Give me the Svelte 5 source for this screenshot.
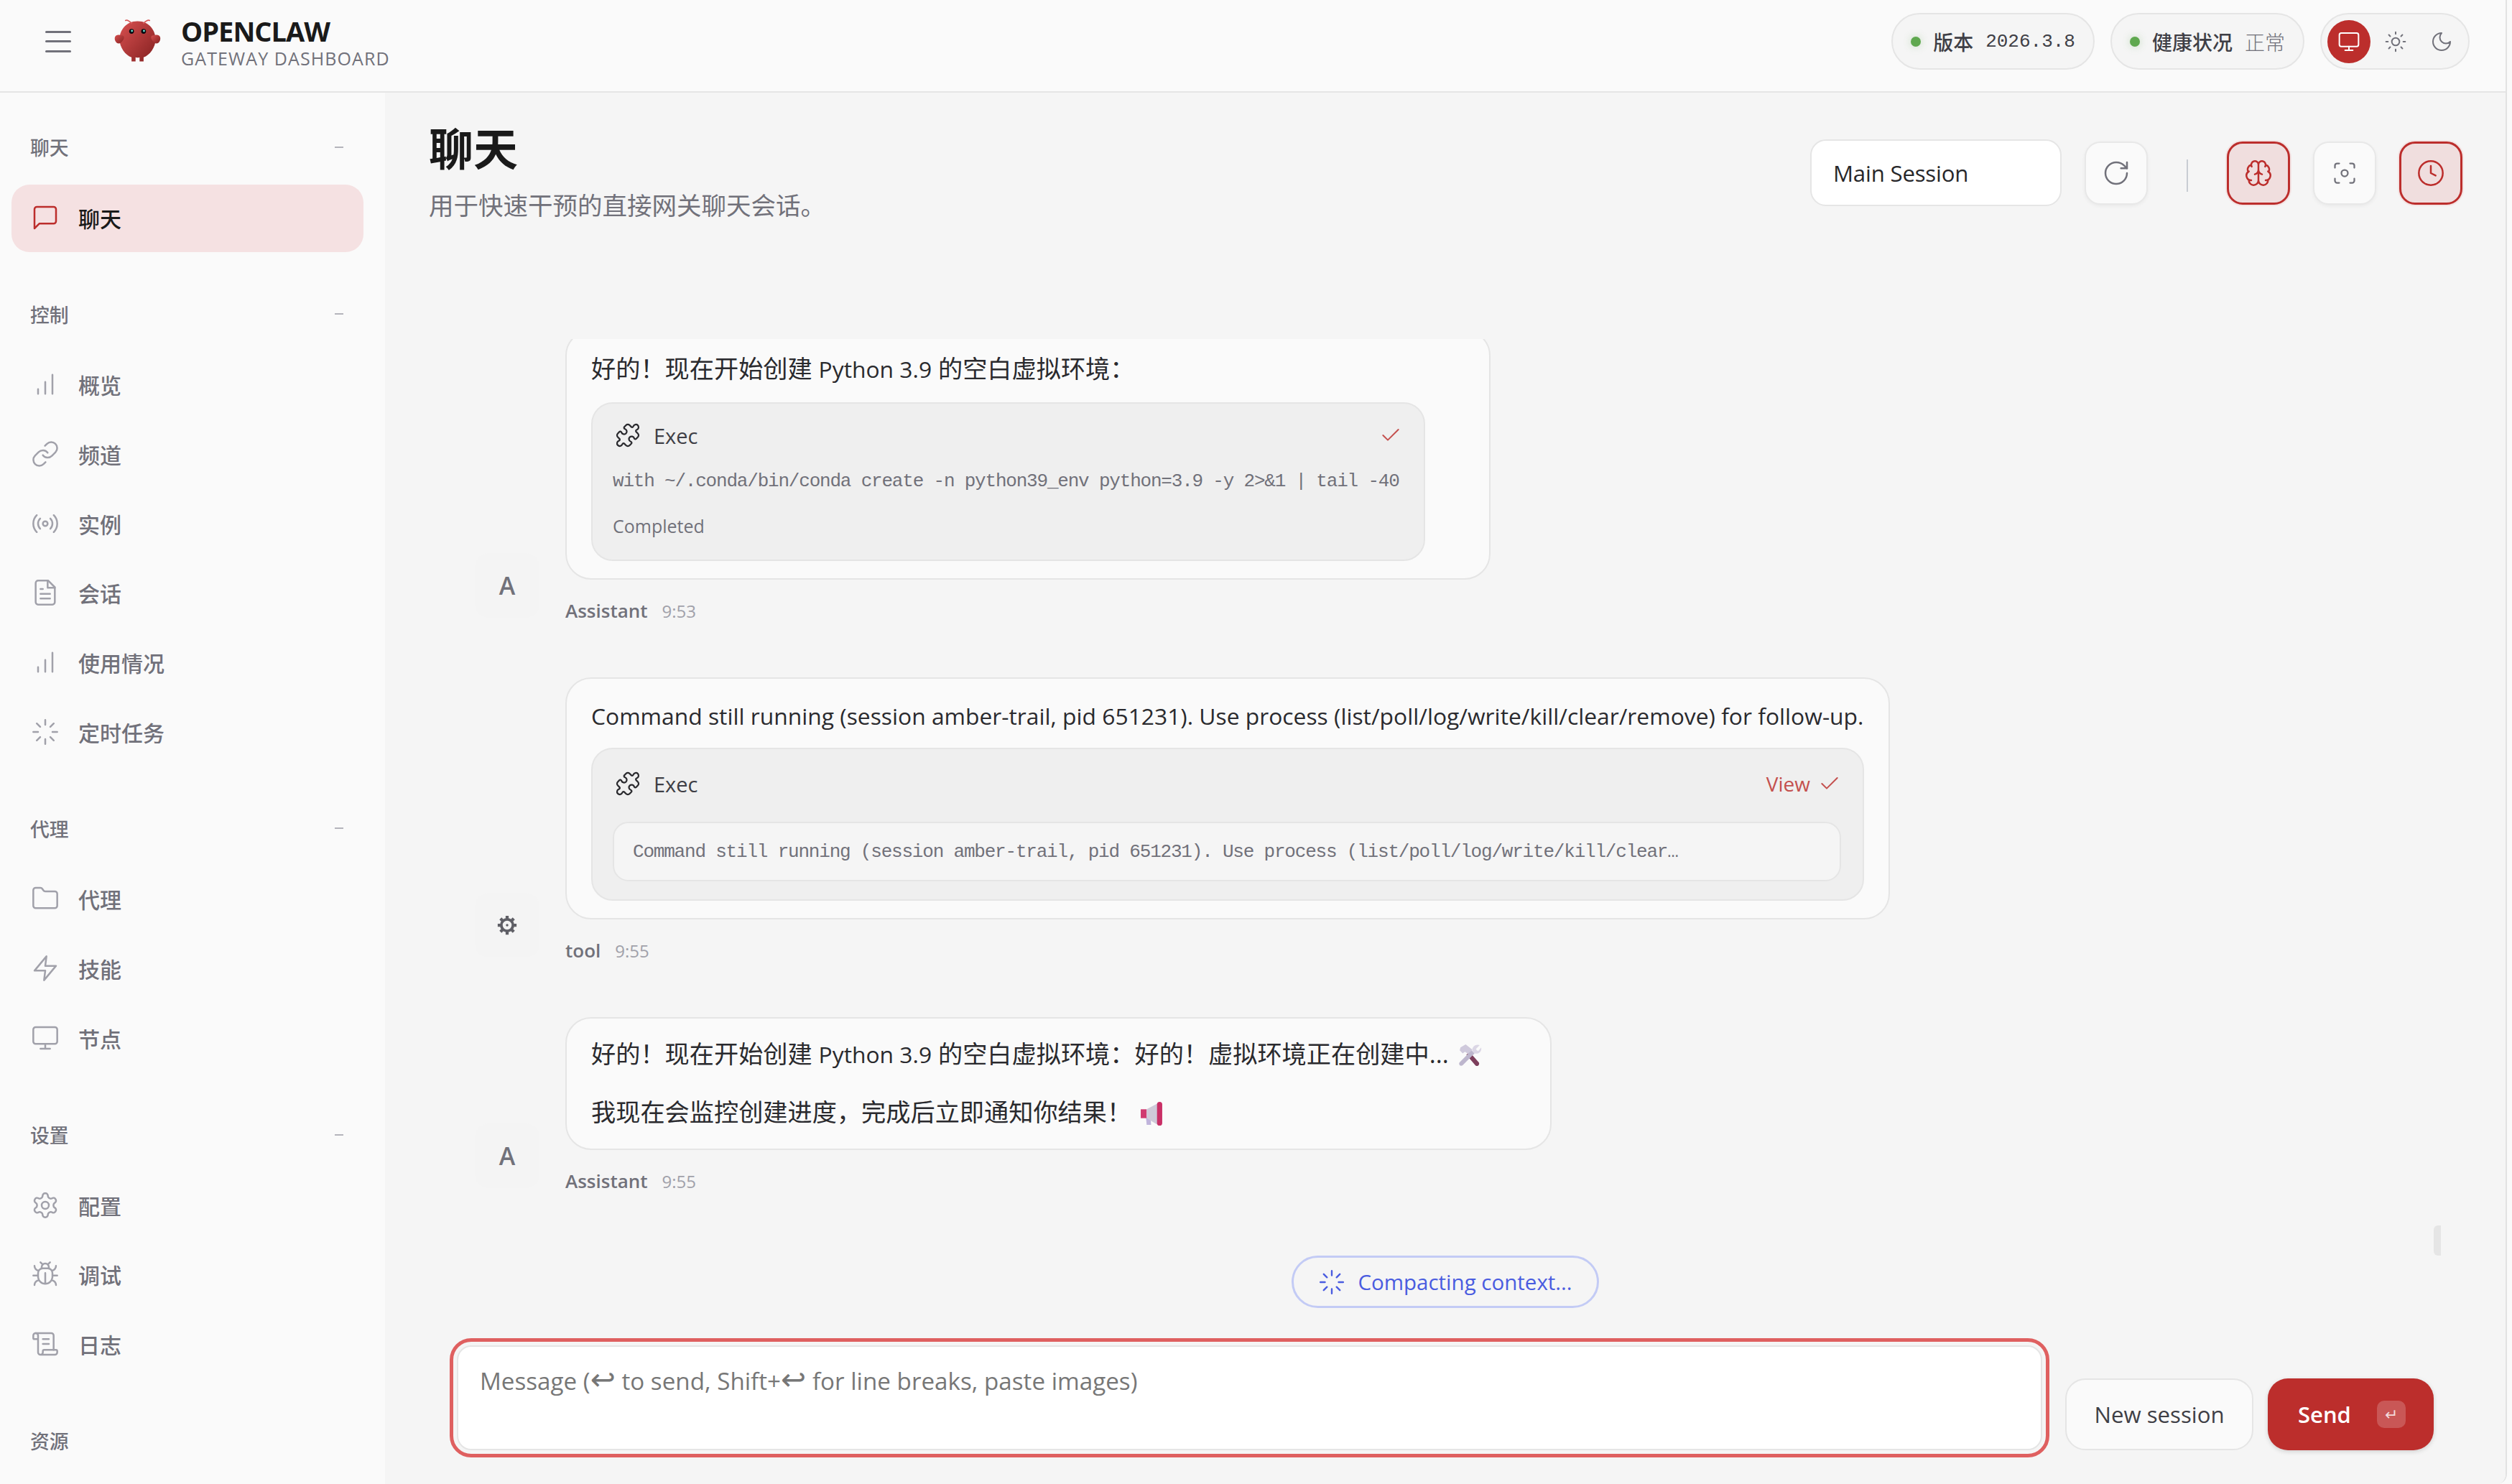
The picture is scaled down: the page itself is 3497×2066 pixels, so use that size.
<script>
  const icons = {
    message: '<path d="M21 15a2 2 0 0 1-2 2H7l-4 4V5a2 2 0 0 1 2-2h14a2 2 0 0 1 2 2z"/>',
    bars: '<path d="M12 20V10M18 20V4M6 20v-4"/>',
    link: '<path d="M10 13a5 5 0 0 0 7.54.54l3-3a5 5 0 0 0-7.07-7.07l-1.72 1.71"/><path d="M14 11a5 5 0 0 0-7.54-.54l-3 3a5 5 0 0 0 7.07 7.07l1.71-1.71"/>',
    radio: '<circle cx="12" cy="12" r="2"/><path d="M4.93 19.07a10 10 0 0 1 0-14.14M7.76 16.24a6 6 0 0 1 0-8.49M16.24 7.76a6 6 0 0 1 0 8.49M19.07 4.93a10 10 0 0 1 0 14.14"/>',
    file: '<path d="M14.5 2H6a2 2 0 0 0-2 2v16a2 2 0 0 0 2 2h12a2 2 0 0 0 2-2V7.5L14.5 2z"/><path d="M14 2v6h6M16 13H8M16 17H8M10 9H8"/>',
    loader: '<path d="M12 2v4M12 18v4M4.93 4.93l2.83 2.83M16.24 16.24l2.83 2.83M2 12h4M18 12h4M4.93 19.07l2.83-2.83M16.24 7.76l2.83-2.83"/>',
    folder: '<path d="M4 20h16a2 2 0 0 0 2-2V8a2 2 0 0 0-2-2h-7.93a2 2 0 0 1-1.66-.9l-.82-1.2A2 2 0 0 0 7.93 3H4a2 2 0 0 0-2 2v13c0 1.1.9 2 2 2Z"/>',
    zap: '<path d="M13 2 3 14h9l-1 8 10-12h-9l1-8z"/>',
    monitor: '<rect x="2" y="3" width="20" height="14" rx="2"/><path d="M8 21h8M12 17v4"/>',
    gear: '<path d="M12.22 2h-.44a2 2 0 0 0-2 2v.18a2 2 0 0 1-1 1.73l-.43.25a2 2 0 0 1-2 0l-.15-.08a2 2 0 0 0-2.73.73l-.22.38a2 2 0 0 0 .73 2.73l.15.1a2 2 0 0 1 1 1.72v.51a2 2 0 0 1-1 1.74l-.15.09a2 2 0 0 0-.73 2.73l.22.38a2 2 0 0 0 2.73.73l.15-.08a2 2 0 0 1 2 0l.43.25a2 2 0 0 1 1 1.73V20a2 2 0 0 0 2 2h.44a2 2 0 0 0 2-2v-.18a2 2 0 0 1 1-1.73l.43-.25a2 2 0 0 1 2 0l.15.08a2 2 0 0 0 2.73-.73l.22-.39a2 2 0 0 0-.73-2.73l-.15-.08a2 2 0 0 1-1-1.74v-.5a2 2 0 0 1 1-1.74l.15-.09a2 2 0 0 0 .73-2.73l-.22-.38a2 2 0 0 0-2.73-.73l-.15.08a2 2 0 0 1-2 0l-.43-.25a2 2 0 0 1-1-1.73V4a2 2 0 0 0-2-2z"/><circle cx="12" cy="12" r="3"/>',
    cog: '<circle cx="12" cy="12" r="6.5" stroke-width="3"/><circle cx="12" cy="12" r="1.4" fill="currentColor" stroke="none"/><path stroke-width="3.4" stroke-linecap="butt" d="M12 1.5v3.5M12 19v3.5M1.5 12H5M19 12h3.5M4.6 4.6l2.4 2.4M17 17l2.4 2.4M4.6 19.4 7 17M17 7l2.4-2.4"/>',
    bug: '<path d="m8 2 1.88 1.88M14.12 3.88 16 2M9 7.13v-1a3.003 3.003 0 1 1 6 0v1M12 20c-3.3 0-6-2.7-6-6v-3a4 4 0 0 1 4-4h4a4 4 0 0 1 4 4v3c0 3.3-2.7 6-6 6M12 20v-9M6.53 9C4.6 8.8 3 7.1 3 5M6 13H2M3 21c0-2.1 1.7-3.9 3.8-4M20.97 5c0 2.1-1.6 3.8-3.5 4M22 13h-4M17.2 17c2.1.1 3.8 1.9 3.8 4"/>',
    scroll: '<path d="M15 12h-5M15 8h-5M19 17V5a2 2 0 0 0-2-2H4"/><path d="M8 21h12a2 2 0 0 0 2-2v-1a1 1 0 0 0-1-1H11a1 1 0 0 0-1 1v1a2 2 0 1 1-4 0V5a2 2 0 1 0-4 0v2a1 1 0 0 0 1 1h3"/>',
    puzzle: '<path d="M19.439 7.85c-.049.322.059.648.289.878l1.568 1.568c.47.47.706 1.087.706 1.704s-.235 1.233-.706 1.704l-1.611 1.611a.98.98 0 0 1-.837.276c-.47-.07-.802-.48-.968-.925a2.501 2.501 0 1 0-3.214 3.214c.446.166.855.497.925.968a.979.979 0 0 1-.276.837l-1.61 1.61a2.404 2.404 0 0 1-1.705.707 2.402 2.402 0 0 1-1.704-.706l-1.568-1.568a1.026 1.026 0 0 0-.877-.29c-.493.074-.84.504-1.02.968a2.5 2.5 0 1 1-3.237-3.237c.464-.18.894-.527.967-1.02a1.026 1.026 0 0 0-.289-.877l-1.568-1.568A2.402 2.402 0 0 1 1.998 12c0-.617.236-1.234.706-1.704L4.23 8.77c.24-.24.581-.353.917-.303.515.077.877.528 1.073 1.01a2.5 2.5 0 1 0 3.259-3.259c-.482-.196-.933-.558-1.01-1.073-.05-.336.062-.676.303-.917l1.525-1.525A2.402 2.402 0 0 1 12 1.998c.617 0 1.234.236 1.704.706l1.568 1.568c.23.23.556.338.877.29.493-.074.84-.504 1.02-.968a2.5 2.5 0 1 1 3.237 3.237c-.464.18-.894.527-.967 1.02Z"/>',
    refresh: '<path d="M21 12a9 9 0 1 1-9-9c2.52 0 4.93 1 6.74 2.74L21 8"/><path d="M21 3v5h-5"/>',
    brain: '<path d="M12 18V5M15 13a4.17 4.17 0 0 1-3-4 4.17 4.17 0 0 1-3 4M17.598 6.5A3 3 0 1 0 12 5a3 3 0 1 0-5.598 1.5M17.997 5.125a4 4 0 0 1 2.526 5.77M18 18a4 4 0 0 0 2-7.464M19.967 17.483A4 4 0 1 1 12 18a4 4 0 1 1-7.967-.517M6 18a4 4 0 0 1-2-7.464M6.003 5.125a4 4 0 0 0-2.526 5.77"/>',
    focus: '<path d="M3 7V5a2 2 0 0 1 2-2h2M17 3h2a2 2 0 0 1 2 2v2M21 17v2a2 2 0 0 1-2 2h-2M7 21H5a2 2 0 0 1-2-2v-2"/><circle cx="12" cy="12" r="3"/>',
    clock: '<circle cx="12" cy="12" r="10"/><path d="M12 6v6l4 2"/>',
    sun: '<circle cx="12" cy="12" r="4"/><path d="M12 2v2M12 20v2M4.93 4.93l1.41 1.41M17.66 17.66l1.41 1.41M2 12h2M20 12h2M6.34 17.66l-1.41 1.41M19.07 4.93l-1.41 1.41"/>',
    moon: '<path d="M12 3a6 6 0 0 0 9 9 9 9 0 1 1-9-9Z"/>',
    check: '<path d="M20 6 9 17l-5-5"/>'
  };

  const groups = [
    { label: "聊天", items: [{ icon: "message", text: "聊天", active: true }] },
    {
      label: "控制",
      items: [
        { icon: "bars", text: "概览" },
        { icon: "link", text: "频道" },
        { icon: "radio", text: "实例" },
        { icon: "file", text: "会话" },
        { icon: "bars", text: "使用情况" },
        { icon: "loader", text: "定时任务" }
      ]
    },
    {
      label: "代理",
      items: [
        { icon: "folder", text: "代理" },
        { icon: "zap", text: "技能" },
        { icon: "monitor", text: "节点" }
      ]
    },
    {
      label: "设置",
      items: [
        { icon: "gear", text: "配置" },
        { icon: "bug", text: "调试" },
        { icon: "scroll", text: "日志" }
      ]
    }
  ];

  const command = "Command still running (session amber-trail, pid 651231). Use process (list/poll/log/write/kill/clear/remove) for follow-up.";
</script>

{#snippet icon(name, cls = "")}
  <svg class="ic {cls}" viewBox="0 0 24 24" fill="none" stroke="currentColor" stroke-linecap="round" stroke-linejoin="round">{@html icons[name]}</svg>
{/snippet}

<div class="app">
  <header class="topbar">
    <button class="burger" aria-label="menu"><i></i><i></i><i></i></button>
    <svg class="logo" viewBox="0 0 120 120">
      <defs>
        <linearGradient id="claw" x1="0%" y1="0%" x2="100%" y2="100%">
          <stop offset="0%" stop-color="#d85050" />
          <stop offset="100%" stop-color="#842020" />
        </linearGradient>
      </defs>
      <path fill="url(#claw)" d="M60 10C30 10 15 35 15 55C15 75 30 95 45 100L45 110L55 110L55 100C55 100 60 102 65 100L65 110L75 110L75 100C90 95 105 75 105 55C105 35 90 10 60 10Z" />
      <path fill="url(#claw)" d="M20 45C5 40 0 50 5 60C10 70 20 65 25 55C28 48 25 45 20 45Z" />
      <path fill="url(#claw)" d="M100 45C115 40 120 50 115 60C110 70 100 65 95 55C92 48 95 45 100 45Z" />
      <path d="M45 15Q35 5 30 8M75 15Q85 5 90 8" fill="none" stroke="#d85a5a" stroke-width="3" stroke-linecap="round" />
      <circle cx="45" cy="35" r="6" fill="#050810" />
      <circle cx="75" cy="35" r="6" fill="#050810" />
      <circle cx="46" cy="34" r="2.5" fill="#6fe3d2" />
      <circle cx="76" cy="34" r="2.5" fill="#6fe3d2" />
    </svg>
    <div class="brand">
      <div class="brand-title">OPENCLAW</div>
      <div class="brand-sub">GATEWAY DASHBOARD</div>
    </div>
    <div class="top-right">
      <div class="pill"><span class="dot"></span><span class="pill-label">版本</span><span class="pill-mono">2026.3.8</span></div>
      <div class="pill"><span class="dot"></span><span class="pill-label">健康状况</span><span class="pill-value">正常</span></div>
      <div class="theme">
        <span class="theme-btn on">{@render icon("monitor")}</span>
        <span class="theme-btn">{@render icon("sun")}</span>
        <span class="theme-btn">{@render icon("moon")}</span>
      </div>
    </div>
  </header>

  <div class="body">
    <nav class="sidebar">
      {#each groups as group}
        <section class="group">
          <div class="group-label"><span>{group.label}</span><span class="dash"></span></div>
          <div class="items">
            {#each group.items as item}
              <div class="item" class:active={item.active}>
                {@render icon(item.icon)}
                <span>{item.text}</span>
              </div>
            {/each}
          </div>
        </section>
      {/each}
      <section class="group">
        <div class="group-label"><span>资源</span></div>
      </section>
    </nav>

    <main class="main">
      <div class="page-head">
        <div>
          <h1>聊天</h1>
          <p class="page-sub">用于快速干预的直接网关聊天会话。</p>
        </div>
        <div class="controls">
          <div class="session">Main Session</div>
          <button class="ctl">{@render icon("refresh")}</button>
          <span class="divider"></span>
          <button class="ctl on">{@render icon("brain")}</button>
          <button class="ctl">{@render icon("focus", "small")}</button>
          <button class="ctl on">{@render icon("clock")}</button>
        </div>
      </div>

      <div class="thread">
        <div class="msg">
          <div class="avatar">A</div>
          <div class="msg-col">
            <div class="card w1">
              <p>好的！现在开始创建 <span class="lat">Python 3.9</span> 的空白虚拟环境：</p>
              <div class="tool narrow">
                <div class="tool-head">
                  {@render icon("puzzle")}
                  <span class="tool-name">Exec</span>
                  <span class="tool-state">{@render icon("check")}</span>
                </div>
                <div class="tool-cmd">with ~/.conda/bin/conda create -n python39_env python=3.9 -y 2&gt;&amp;1 | tail -40</div>
                <div class="tool-done">Completed</div>
              </div>
            </div>
            <div class="meta"><b>Assistant</b><time>9:53</time></div>
          </div>
        </div>

        <div class="msg">
          <div class="avatar">{@render icon("cog", "cog")}</div>
          <div class="msg-col">
            <div class="card w2">
              <p class="lat">{command}</p>
              <div class="tool">
                <div class="tool-head wide">
                  {@render icon("puzzle")}
                  <span class="tool-name">Exec</span>
                  <span class="tool-state">View {@render icon("check")}</span>
                </div>
                <div class="tool-out">Command still running (session amber-trail, pid 651231). Use process (list/poll/log/write/kill/clear…</div>
              </div>
            </div>
            <div class="meta"><b>tool</b><time>9:55</time></div>
          </div>
        </div>

        <div class="msg">
          <div class="avatar">A</div>
          <div class="msg-col">
            <div class="card w3">
              <p class="para">好的！现在开始创建 <span class="lat">Python 3.9</span> 的空白虚拟环境：好的！虚拟环境正在创建中...
                <svg class="emoji" viewBox="0 0 32 32">
                  <path d="M12 15 24 29c1 1.5 3.5 1.5 4.5 0s1-3 0-4L16 11z" fill="#7d3f5c" />
                  <path d="M4 5l7-4 9 7-5 6-5-3-3 2-4-4z" fill="#cfc9dc" />
                  <path d="M3 25 19 9l4 4L7 29c-1 1-3 1-4 0s-1-3 0-4z" fill="#bdb6cd" />
                  <path d="M30 2l-5 5 1 2 2 1 4-5c1 5-3 10-9 8l-3-3c-1-6 5-10 10-8z" fill="#dbd6e5" />
                </svg>
              </p>
              <p class="para">我现在会监控创建进度，完成后立即通知你结果！
                <svg class="emoji" viewBox="0 0 32 32">
                  <path d="M8 20h6l1 11H9z" fill="#c0b4dc" />
                  <path d="M1 10h8v12H1z" fill="#d03a70" />
                  <path d="M9 10 24 2v29L9 22z" fill="#cfc9d8" />
                  <rect x="23" y="0" width="7" height="32" rx="3.5" fill="#c92f66" />
                </svg>
              </p>
            </div>
            <div class="meta"><b>Assistant</b><time>9:55</time></div>
          </div>
        </div>

        <div class="compacting">{@render icon("loader")}<span>Compacting context...</span></div>
        <span class="thumb"></span>
      </div>

      <div class="compose">
        <div class="input">Message (<span class="arrow">↩</span> to send, Shift+<span class="arrow">↩</span> for line breaks, paste images)</div>
        <button class="btn">New session</button>
        <button class="btn send">Send<kbd>↵</kbd></button>
      </div>
    </main>
  </div>
</div>

<style>
  :global(body) {
    margin: 0;
    background: #fafafa;
    overflow: hidden;
  }

  .app {
    width: 3490px;
    height: 2066px;
    box-sizing: border-box;
    border-right: 2px solid #e2e2e2;
    border-bottom-right-radius: 14px;
    display: flex;
    flex-direction: column;
    overflow: hidden;
    font-family: "Open Sans", "Noto Sans CJK SC", sans-serif;
    font-size: 33.5px;
    color: #1a1a1a;
  }

  button {
    font: inherit;
    color: inherit;
    padding: 0;
    cursor: pointer;
  }

  .ic {
    width: 40px;
    height: 40px;
    stroke-width: 1.5;
    flex: none;
    display: block;
  }

  /* top bar */
  .topbar {
    height: 129px;
    box-sizing: border-box;
    border-bottom: 2px solid #e5e5e5;
    background: #fafafa;
    display: flex;
    align-items: center;
    padding: 0 50px 12px 63px;
    flex: none;
  }
  .burger {
    width: 36px;
    height: 30px;
    background: none;
    border: 0;
    display: flex;
    flex-direction: column;
    justify-content: space-between;
    margin-right: 59px;
  }
  .burger i {
    display: block;
    height: 3px;
    border-radius: 2px;
    background: #71717a;
  }
  .logo {
    width: 67px;
    height: 67px;
    margin-right: 27px;
  }
  .brand-title {
    font-size: 38px;
    font-weight: 700;
    line-height: 46px;
    letter-spacing: -1px;
    color: #1a1a1a;
  }
  .brand-sub {
    font-size: 25px;
    line-height: 30px;
    letter-spacing: 1.1px;
    color: #71717a;
  }
  .top-right {
    margin-left: auto;
    display: flex;
    align-items: center;
    gap: 22px;
  }
  .pill {
    height: 79px;
    box-sizing: border-box;
    border: 2px solid #e5e5e5;
    border-radius: 40px;
    background: #f5f5f5;
    display: flex;
    align-items: center;
    padding: 0 25px;
    font-size: 28px;
    color: #3f3f46;
  }
  .dot {
    width: 14px;
    height: 14px;
    border-radius: 50%;
    background: #5fa84f;
    box-shadow: 0 0 12px rgba(95, 168, 79, 0.3);
    margin-right: 17px;
  }
  .pill-label {
    font-weight: 500;
  }
  .pill-mono {
    font-family: "Liberation Mono", monospace;
    font-size: 26px;
    margin-left: 17px;
  }
  .pill-value {
    margin-left: 17px;
    font-weight: 300;
    color: #71717a;
  }
  .theme {
    height: 79px;
    box-sizing: border-box;
    border: 2px solid #e5e5e5;
    border-radius: 40px;
    background: #f5f5f5;
    display: flex;
    align-items: center;
    padding: 0 7px 0 8px;
    gap: 4.5px;
    color: #71717a;
  }
  .theme-btn {
    width: 60px;
    height: 60px;
    border-radius: 50%;
    display: flex;
    align-items: center;
    justify-content: center;
  }
  .theme-btn .ic {
    width: 32px;
    height: 32px;
  }
  .theme-btn.on {
    background: #bc2e2c;
    color: #fff;
  }

  .body {
    flex: 1;
    display: flex;
    min-height: 0;
  }

  /* sidebar */
  .sidebar {
    width: 536px;
    box-sizing: border-box;
    flex: none;
    padding: 56px 30px 0 16px;
    background: #fafafa;
  }
  .group {
    margin-bottom: 66.5px;
  }
  .group-label {
    height: 40px;
    box-sizing: border-box;
    display: flex;
    align-items: center;
    justify-content: space-between;
    padding: 0 0 1px 26px;
    margin-bottom: 32px;
    font-size: 26.8px;
    font-weight: 500;
    color: #71717a;
  }
  .dash {
    width: 12px;
    height: 2px;
    margin-right: 28px;
    background: #b4b4bb;
  }
  .items {
    display: flex;
    flex-direction: column;
    gap: 2.8px;
  }
  .item {
    height: 94px;
    box-sizing: border-box;
    border-radius: 25px;
    display: flex;
    align-items: center;
    gap: 26px;
    padding: 0 0 3px 27px;
    font-size: 30px;
    font-weight: 500;
    color: #71717a;
  }
  .item .ic {
    color: #a1a1aa;
    stroke-width: 1.5;
  }
  .item.active {
    background: #f5e1e2;
    color: #1a1a1a;
  }
  .item.active .ic {
    color: #bc2e2c;
  }

  /* main column */
  .main {
    flex: 1;
    min-width: 0;
    display: flex;
    flex-direction: column;
    background: #f5f5f5;
  }
  .page-head {
    height: 343px;
    box-sizing: border-box;
    flex: none;
    display: flex;
    justify-content: space-between;
    padding: 38px 60px 0 61px;
  }
  h1 {
    margin: 0;
    font-size: 62px;
    line-height: 80px;
    font-weight: 700;
    color: #1a1a1a;
  }
  .page-sub {
    margin: 17px 0 0;
    font-size: 34.5px;
    line-height: 44px;
    color: #71717a;
  }
  .controls {
    display: flex;
    align-items: center;
    gap: 32px;
    height: 93px;
    margin-top: 27px;
  }
  .session {
    width: 350px;
    height: 93px;
    box-sizing: border-box;
    border: 2px solid #e5e5e5;
    border-radius: 22px;
    background: #fff;
    padding-left: 30px;
    display: flex;
    align-items: center;
    font-size: 31.2px;
    letter-spacing: -0.2px;
    color: #27272a;
  }
  .ctl {
    width: 88px;
    height: 88px;
    box-sizing: border-box;
    border: 2px solid #e8e8e8;
    border-radius: 22px;
    background: #fafafa;
    color: #71717a;
    display: flex;
    align-items: center;
    justify-content: center;
    box-shadow: 0 2px 5px rgba(0, 0, 0, 0.05);
  }
  .ctl.on {
    border: 3px solid #bc2e2c;
    background: #f0dede;
    color: #bc2e2c;
    box-shadow: 0 0 0 2px #f3e4e4;
  }
  .ctl .small {
    width: 36px;
    height: 36px;
  }
  .divider {
    width: 2px;
    height: 45px;
    margin: 8px 22px 0 22px;
    background: #c8ccd3;
  }

  /* messages */
  .thread {
    flex: 1;
    min-height: 0;
    position: relative;
    overflow: hidden;
    display: flex;
    flex-direction: column;
    justify-content: flex-end;
    gap: 76px;
    padding: 0 0 26px 125px;
  }
  .msg {
    display: flex;
    align-items: flex-end;
    gap: 36px;
    flex: none;
  }
  .avatar {
    width: 90px;
    height: 90px;
    flex: none;
    margin-bottom: 7px;
    border-radius: 20px;
    background: #f4f4f4;
    display: flex;
    align-items: center;
    justify-content: center;
    font-size: 34px;
    font-weight: 600;
    color: #71717a;
  }
  .avatar .cog {
    width: 30px;
    height: 30px;
    color: #5f5f66;
  }
  .card {
    box-sizing: border-box;
    border: 2px solid #e5e5e5;
    border-radius: 36px;
    background: #fafafa;
    padding: 25px 34px 24px;
    font-size: 34.2px;
    color: #2a2a2e;
    white-space: nowrap;
  }
  .w1 {
    width: 1288px;
  }
  .w2 {
    width: 1844px;
  }
  .w3 {
    width: 1373px;
    padding-top: 22px;
  }
  p {
    margin: 0;
    line-height: 54px;
  }
  .lat {
    font-size: 31.8px;
  }
  .card .para + .para {
    margin-top: 26px;
  }
  .emoji {
    width: 35px;
    height: 33px;
    vertical-align: -6px;
    margin-left: 2px;
  }
  .tool {
    margin-top: 17px;
    box-sizing: border-box;
    border: 2px solid #e5e5e5;
    border-radius: 30px;
    background: #efefef;
    padding: 31px 30px 25px 28px;
  }
  .tool.narrow {
    width: 1161px;
    margin-top: 19px;
    padding-top: 27px;
    padding-bottom: 27px;
  }
  .tool-head {
    display: flex;
    align-items: center;
    height: 34px;
    margin-bottom: 27px;
  }
  .tool-head.wide {
    margin-bottom: 36px;
  }
  .tool-head .ic {
    width: 36px;
    height: 36px;
    margin-left: 3px;
  }
  .tool-name {
    margin-left: 18px;
    font-size: 29px;
    font-weight: 500;
    color: #3f3f46;
  }
  .tool-state {
    margin-left: auto;
    display: flex;
    align-items: center;
    gap: 8px;
    font-size: 28px;
    color: #c4504e;
  }
  .tool-state .ic {
    width: 32px;
    height: 32px;
  }
  .tool-cmd,
  .tool-out {
    font-family: "Liberation Mono", monospace;
    font-size: 26px;
    letter-spacing: -1.2px;
    line-height: 40px;
    color: #71717a;
  }
  .tool-done {
    margin-top: 22px;
    font-size: 25px;
    line-height: 40px;
    color: #71717a;
  }
  .tool-out {
    box-sizing: border-box;
    height: 83px;
    border: 2px solid #e5e5e5;
    border-radius: 22px;
    background: #f5f5f5;
    padding: 20px 26px;
  }
  .meta {
    display: flex;
    align-items: center;
    gap: 20px;
    height: 34px;
    margin-top: 26px;
    font-size: 26px;
    color: #71717a;
  }
  .meta b {
    font-weight: 600;
  }
  .meta time {
    font-size: 24px;
    color: #a1a1aa;
  }
  .compacting {
    flex: none;
    align-self: center;
    margin: 11px 0 0 -125px;
    height: 73px;
    box-sizing: border-box;
    border: 3px solid #c3cbf5;
    border-radius: 37px;
    padding: 0 34px;
    display: flex;
    align-items: center;
    gap: 17px;
    font-size: 29.5px;
    color: #4a5ce0;
  }
  .compacting .ic {
    width: 38px;
    height: 38px;
  }
  .thumb {
    position: absolute;
    right: 90px;
    top: 1234px;
    width: 10px;
    height: 42px;
    border-radius: 6px 0 0 6px;
    background: #e5e5e5;
  }

  /* compose */
  .compose {
    height: 219px;
    box-sizing: border-box;
    flex: none;
    display: flex;
    align-items: flex-end;
    gap: 20px;
    padding: 0 100px 47px;
  }
  .input {
    flex: 1;
    height: 146px;
    box-sizing: border-box;
    margin-right: 12px;
    border: 2px solid #e5e5e5;
    border-radius: 20px;
    outline: 5px solid #df6060;
    outline-offset: 5px;
    background: #fff;
    padding: 23px 30px;
    font-size: 33.2px;
    line-height: 50px;
    color: #777;
  }
  .arrow {
    font: 42px "DejaVu Sans", sans-serif;
    line-height: 1;
  }
  .btn {
    height: 100px;
    box-sizing: border-box;
    width: 262px;
    border: 2px solid #e5e5e5;
    border-radius: 28px;
    background: #fafafa;
    font-size: 31.2px;
    font-weight: 500;
    color: #3f3f46;
  }
  .send {
    width: 231px;
    border: 0;
    background: #bc2e2c;
    color: #fff;
    font-size: 31px;
    font-weight: 600;
    display: flex;
    align-items: center;
    padding-left: 42px;
    box-shadow: 0 2px 6px rgba(0, 0, 0, 0.15);
  }
  kbd {
    width: 40px;
    height: 38px;
    margin-left: 36px;
    border-radius: 10px;
    background: rgba(255, 255, 255, 0.2);
    font: 22px "DejaVu Sans", sans-serif;
    color: rgba(255, 255, 255, 0.8);
    display: flex;
    align-items: center;
    justify-content: center;
  }
</style>
